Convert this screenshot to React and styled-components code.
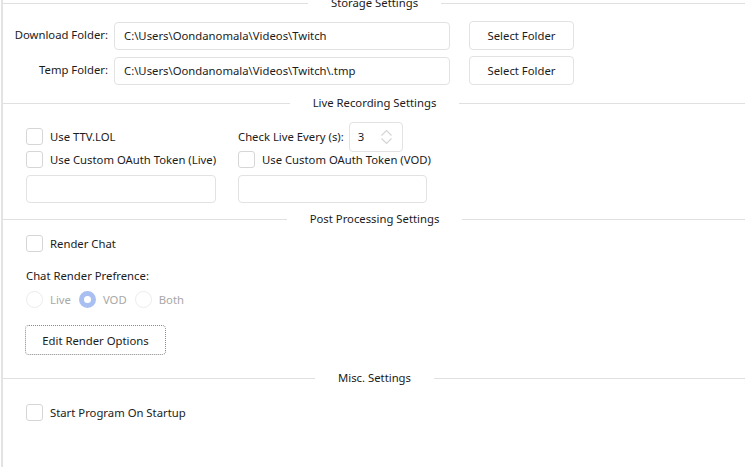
import React from "react";
import styled, { createGlobalStyle } from "styled-components";

const GlobalStyle = createGlobalStyle`
    html, body {
        margin: 0;
        padding: 0;
        background: #ffffff;
        overflow: hidden;
    }
    body {
        font-family: "Noto Sans", "Segoe UI", sans-serif;
        font-size: 11.3px;
        color: #1b1b1b;
    }
`;

const Page = styled.div`
    width: 745px;
    height: 467px;
    box-sizing: border-box;
    border-left: 2px solid #e3e3e3;
    margin-left: 1px;
    overflow: hidden;
`;

const Scroller = styled.div`
    margin-top: -4px;
`;

const Header = styled.div`
    display: flex;
    align-items: center;
    height: 14px;
    &::before, &::after {
        content: "";
        flex: 1;
        height: 1px;
        background: #e0e0e0;
    }
    span {
        padding: 0 23px;
        line-height: 14px;
        white-space: nowrap;
    }
`;

const Body = styled.div`
    padding: ${p => p.$pad};
    display: flex;
    flex-direction: column;
`;

const FolderRow = styled.div`
    display: flex;
    align-items: center;
    height: 29px;
    & + & {
        margin-top: 6px;
    }
`;

const FolderLabel = styled.div`
    width: 111px;
    text-align: right;
    padding-right: 6px;
    box-sizing: border-box;
    margin-top: -3px;
    white-space: nowrap;
`;

const TextBox = styled.div`
    width: ${p => p.$w}px;
    height: 28px;
    box-sizing: border-box;
    border: 1px solid #e2e2e2;
    border-radius: 4px;
    padding: 0 9px;
    display: flex;
    align-items: center;
    white-space: nowrap;
    overflow: hidden;
`;

const Button = styled.div`
    width: ${p => p.$w}px;
    height: ${p => p.$h}px;
    box-sizing: border-box;
    border: 1px ${p => (p.$focus ? "dotted #8a8a8a" : "solid #e2e2e2")};
    border-radius: 4px;
    display: flex;
    align-items: center;
    justify-content: center;
    margin-left: ${p => p.$ml || 0}px;
    white-space: nowrap;
`;

const FocusButton = styled(Button)`
    margin-top: 17px;
    margin-left: -1px;
`;

const LiveGrid = styled.div`
    display: grid;
    grid-template-columns: 212px 1fr;
    grid-template-rows: 17px 17px 29px;
    row-gap: 6px;
    align-items: center;
`;

const Check = styled.label`
    display: flex;
    align-items: center;
    height: 17px;
    gap: 7px;
    white-space: nowrap;
`;

const Box = styled.span`
    width: 17px;
    height: 17px;
    box-sizing: border-box;
    border: 1px solid #d6d6d6;
    border-radius: 3px;
    flex-shrink: 0;
`;

const NumberRow = styled.div`
    display: flex;
    align-items: center;
    gap: 5px;
    white-space: nowrap;
`;

const NumBox = styled.div`
    width: 54px;
    height: 30px;
    box-sizing: border-box;
    border: 1px solid #e2e2e2;
    border-radius: 4px;
    display: flex;
    align-items: center;
    justify-content: space-between;
    padding: 0 9px 0 8px;
    svg {
        display: block;
    }
`;

const Caption = styled.div`
    margin-top: 16px;
    line-height: 16px;
`;

const Radios = styled.div`
    display: flex;
    align-items: center;
    height: 17px;
    margin-top: 7px;
`;

const Radio = styled.label`
    display: flex;
    align-items: center;
    gap: 7px;
    color: #a8a8a8;
    margin-right: 8px;
`;

const Circle = styled.span`
    width: 17px;
    height: 17px;
    box-sizing: border-box;
    border-radius: 50%;
    border: ${p => (p.$on ? "5px solid #a9bff2" : "1px solid #ececec")};
    background: #ffffff;
`;

const Spinner = () => (
    <svg width="13" height="18" viewBox="0 0 13 18">
        <path d="M1.5 7.5 L6.5 2.5 L11.5 7.5" fill="none" stroke="#d4d4d4" strokeWidth="1.2" />
        <path d="M1.5 10.5 L6.5 15.5 L11.5 10.5" fill="none" stroke="#d4d4d4" strokeWidth="1.2" />
    </svg>
);

const Section = ({ title, pad, children }) => (
    <React.Fragment>
        <Header><span>{title}</span></Header>
        <Body $pad={pad}>{children}</Body>
    </React.Fragment>
);

const App = () => {
    return (
        <React.Fragment>
            <GlobalStyle />
            <Page>
                <Scroller>
                    <Section title="Storage Settings" pad="11px 0 11px 0">
                        <FolderRow>
                            <FolderLabel>Download Folder:</FolderLabel>
                            <TextBox $w={336}>C:\Users\Oondanomala\Videos\Twitch</TextBox>
                            <Button $w={105} $h={29} $ml={19}>Select Folder</Button>
                        </FolderRow>
                        <FolderRow>
                            <FolderLabel>Temp Folder:</FolderLabel>
                            <TextBox $w={336}>C:\Users\Oondanomala\Videos\Twitch\.tmp</TextBox>
                            <Button $w={105} $h={29} $ml={19}>Select Folder</Button>
                        </FolderRow>
                    </Section>

                    <Section title="Live Recording Settings" pad="18px 0 9px 23px">
                        <LiveGrid>
                            <Check><Box />Use TTV.LOL</Check>
                            <NumberRow>
                                <span>Check Live Every (s):</span>
                                <NumBox><span>3</span><Spinner /></NumBox>
                            </NumberRow>
                            <Check><Box />Use Custom OAuth Token (Live)</Check>
                            <Check><Box />Use Custom OAuth Token (VOD)</Check>
                            <TextBox $w={190} />
                            <TextBox $w={189} />
                        </LiveGrid>
                    </Section>

                    <Section title="Post Processing Settings" pad="9px 0 16px 23px">
                        <Check><Box />Render Chat</Check>
                        <Caption>Chat Render Prefrence:</Caption>
                        <Radios>
                            <Radio><Circle />Live</Radio>
                            <Radio><Circle $on />VOD</Radio>
                            <Radio><Circle />Both</Radio>
                        </Radios>
                        <FocusButton $w={141} $h={30} $focus>
                            Edit Render Options
                        </FocusButton>
                    </Section>

                    <Section title="Misc. Settings" pad="19px 0 0 23px">
                        <Check><Box />Start Program On Startup</Check>
                    </Section>
                </Scroller>
            </Page>
        </React.Fragment>
    );
};

export default App;
